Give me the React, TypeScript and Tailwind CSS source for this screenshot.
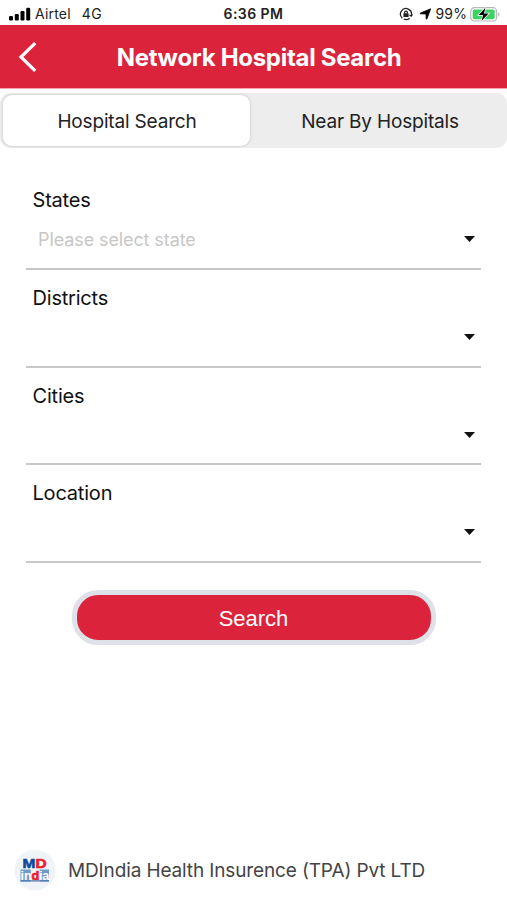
import React, { useState } from 'react';

interface SelectFieldProps {
  label: string;
  placeholder?: string;
}

const fields: SelectFieldProps[] = [
  { label: 'States', placeholder: 'Please select state' },
  { label: 'Districts' },
  { label: 'Cities' },
  { label: 'Location' },
];

const tabs = ['Hospital Search', 'Near By Hospitals'];

const StatusBar: React.FC = () => (
  <div className="grid h-[25px] grid-cols-3 items-center pt-[3px] text-[14px] leading-none text-[#222]">
    <div className="flex items-center pl-[9px]">
      <svg width="22" height="14" viewBox="0 0 22 14" fill="#000">
        <rect x="0" y="9" width="4" height="4.5" rx="1.2" />
        <rect x="5.8" y="7" width="4" height="6.5" rx="1.2" />
        <rect x="11.5" y="4" width="4" height="9.5" rx="1.2" />
        <rect x="17.2" y="0.8" width="4" height="12.7" rx="1.2" />
      </svg>
      <span className="ml-[4px] tracking-[0.2px]">Airtel</span>
      <span className="ml-[11px] tracking-[0.3px]">4G</span>
    </div>
    <div className="text-center font-semibold tracking-[0.45px] whitespace-nowrap">6:36 PM</div>
    <div className="flex items-center justify-end pr-[6px]">
      {/* rotation lock */}
      <svg width="14" height="14" viewBox="0 0 14 14" fill="none" stroke="#222" strokeWidth="1.2">
        <path d="M3.3 11.2A5.5 5.5 0 1 1 12.3 8.6M13.6 7.4 12.2 9.2 10.5 7.9M4.8 12A5.5 5.5 0 0 0 10.6 11.2" />
        <rect x="4.4" y="6.3" width="5.2" height="3.6" rx="0.5" fill="#222" stroke="none" />
        <path d="M5.6 6.5V5.5a1.4 1.4 0 0 1 2.8 0v1" />
      </svg>
      <svg className="ml-[6px]" width="13" height="12" viewBox="0 0 13 12" fill="#000" stroke="#000" strokeWidth="0.8" strokeLinejoin="round">
        <path d="M11.7 .8 7.9 11Q7.4 11.6 7.2 10.8L7 6 1.5 5.8Q.5 5.6 1.4 5.1Z" />
      </svg>
      <span className="ml-[4px] tracking-[0.1px] whitespace-nowrap">99%</span>
      <svg className="ml-[3px]" width="31" height="15" viewBox="0 0 31 15">
        <rect x="0.7" y="0.7" width="26" height="13.3" rx="3.8" fill="#fff" stroke="#b3b9b3" strokeWidth="1.2" />
        <rect x="2.7" y="2.5" width="22" height="9.7" rx="2" fill="#3cd363" />
        <path d="M28.3 5.2v4.4q1.3-.8 1.3-2.2t-1.3-2.2Z" fill="#b3b3b3" />
        <path d="M15.4.8 8.7 8.1h4.5l-1.7 6 7.1-7.6H14Z" fill="#000" stroke="#fff" strokeWidth="1.5" paintOrder="stroke" />
      </svg>
    </div>
  </div>
);

const SelectField: React.FC<SelectFieldProps> = ({ label, placeholder }) => (
  <div className="h-[97.8px] border-b-2 border-[#c8c8c8] pt-[16px]">
    <div className="pl-[6.5px] text-[20px] leading-[24px] tracking-[-0.2px] text-[#111]">{label}</div>
    <button type="button" className="flex h-[54px] w-full items-center justify-between pr-[6px] pl-[12px]">
      <span className="text-[18px] tracking-[-0.1px] text-[#c7c7c7]">{placeholder}</span>
      <svg width="11" height="6" viewBox="0 0 11 6" fill="#111">
        <path d="M0 0H11L5.5 6Z" />
      </svg>
    </button>
  </div>
);

const Logo: React.FC = () => (
  <svg width="42" height="42" viewBox="0 0 42 42" className="shrink-0">
    <circle cx="21" cy="21" r="20.5" fill="#f0f4f8" />
    <path d="M6.5 20.5h10.3v12H6.5zM25.8 20.5H35v12h-9.2z" fill="#6f9bcc" />
    <path d="M6.5 31.9H35" stroke="#4778b4" strokeWidth="1.2" />
    <g fontFamily="Liberation Sans, sans-serif" fontWeight="700">
      <text x="8.6" y="18.6" fontSize="13.2" fill="#10489c" stroke="#10489c" strokeWidth="0.6" textLength="24" lengthAdjust="spacingAndGlyphs">
        M<tspan fill="#e9212e" stroke="#e9212e">D</tspan>
      </text>
      <text x="6.6" y="30.6" fontSize="12.6" fill="#fff" textLength="28.6" lengthAdjust="spacing">
        in<tspan fill="#e9212e" stroke="#e9212e" strokeWidth="0.7">d</tspan>ia
      </text>
    </g>
  </svg>
);

const App: React.FC = () => {
  const [activeTab, setActiveTab] = useState(0);

  return (
    <div className="flex h-[900px] w-[507px] flex-col overflow-hidden bg-white font-['Inter',sans-serif]">
      <StatusBar />

      <header className="grid h-[64px] grid-cols-[56px_1fr_45px] items-center border-b border-[#f5a5ae] bg-[#db243b]">
        <button type="button" aria-label="Back" className="pl-[18px]">
          <svg width="20" height="30" viewBox="0 0 20 30" fill="none" stroke="#fff" strokeWidth="3.2">
            <path d="M17.2 1.2 3 15 17.2 28.8" />
          </svg>
        </button>
        <h1 className="pt-[2px] text-center text-[24px] font-bold tracking-[-0.3px] whitespace-nowrap text-white">
          Network Hospital Search
        </h1>
      </header>

      <div className="mt-[4px] flex h-[55px] rounded-[10px] bg-[#ededed]">
        {tabs.map((tab, index) => (
          <button
            key={tab}
            type="button"
            onClick={() => setActiveTab(index)}
            className={
              activeTab === index
                ? 'my-[2px] mr-[1px] ml-[3px] w-[247px] rounded-[9px] bg-white pt-[3px] pl-[1px] text-[19px] tracking-[-0.17px] text-[#222] shadow-[0_0_3px_rgba(0,0,0,0.2)]'
                : 'flex-1 pt-[3px] pl-[2px] text-[19px] tracking-[-0.17px] text-[#222]'
            }
          >
            {tab}
          </button>
        ))}
      </div>

      <main className="mt-[24px] pr-[26px] pl-[26px]">
        {fields.map((field) => (
          <SelectField key={field.label} {...field} />
        ))}
      </main>

      <button
        type="button"
        className="mt-[27px] ml-[72px] h-[55px] w-[364px] rounded-[26px] border-[5px] border-[#dfe1e8] bg-[#db243b] pt-[1px] pr-[1px] font-['Liberation_Sans',sans-serif] text-[22px] text-white"
      >
        Search
      </button>

      <footer className="mt-auto mb-[9px] flex items-center pl-[14px]">
        <Logo />
        <span className="ml-[12px] pt-[2px] text-[19px] tracking-[-0.13px] whitespace-nowrap text-[#444]">
          MDIndia Health Insurence (TPA) Pvt LTD
        </span>
      </footer>
    </div>
  );
};

export default App;
